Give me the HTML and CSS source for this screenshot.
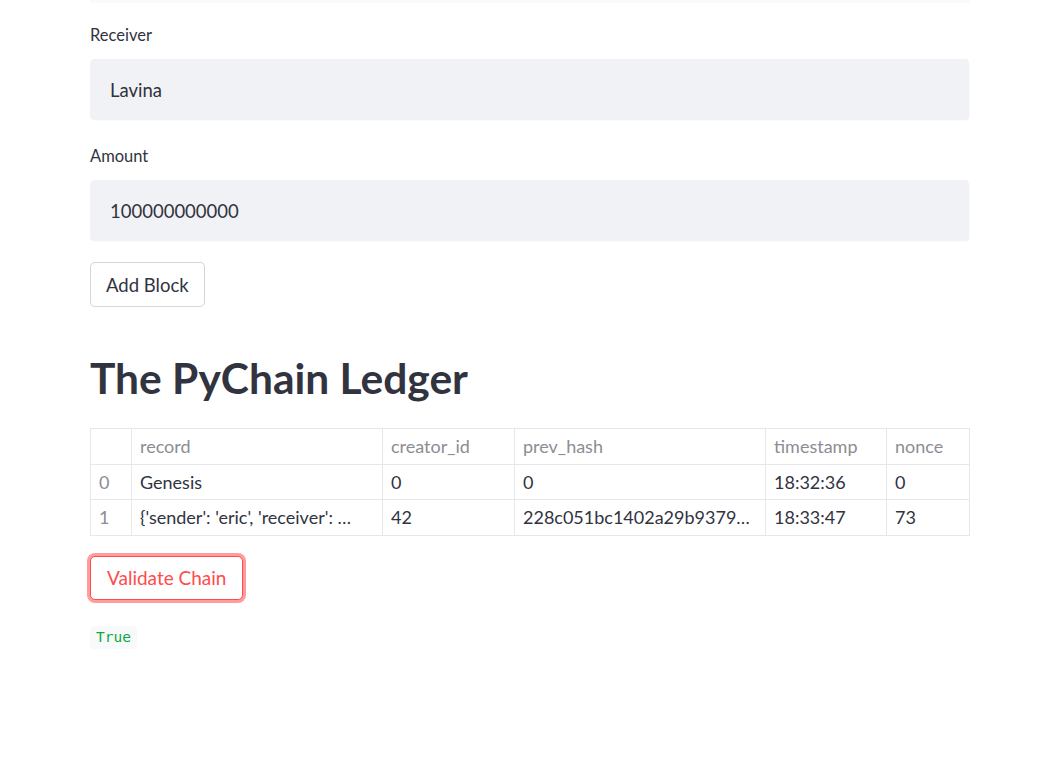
FILE: index.html
```html
<!DOCTYPE html>
<html>
<head>
<meta charset="utf-8">
<link rel="stylesheet" href="styles.css">
</head>
<body>
<div class="page">
  <div class="prev-edge"></div>
  <div class="field">
    <label class="label">Receiver</label>
    <div class="input">Lavina</div>
  </div>
  <div class="field">
    <label class="label">Amount</label>
    <div class="input">100000000000</div>
  </div>
  <button class="btn">Add Block</button>
  <h1 class="title">The PyChain Ledger</h1>
  <table class="df">
    <colgroup>
      <col class="c-idx"><col class="c-rec"><col class="c-cre"><col class="c-hash"><col class="c-ts"><col class="c-nonce">
    </colgroup>
    <thead>
      <tr><th></th><th>record</th><th>creator_id</th><th>prev_hash</th><th>timestamp</th><th>nonce</th></tr>
    </thead>
    <tbody>
      <tr><td class="idx">0</td><td>Genesis</td><td>0</td><td>0</td><td>18:32:36</td><td>0</td></tr>
      <tr><td class="idx">1</td><td>{'sender': 'eric', 'receiver': …</td><td>42</td><td>228c051bc1402a29b9379…</td><td>18:33:47</td><td>73</td></tr>
    </tbody>
  </table>
  <button class="btn btn-focus">Validate Chain</button>
  <div class="result"><code class="code">True</code></div>
</div>
</body>
</html>
```
FILE: styles.css
```css
html, body {
  margin: 0;
  padding: 0;
  background: #ffffff;
}
body {
  font-family: "Lato", "Noto Sans", sans-serif;
  color: #31333f;
}
.page {
  width: 880px;
  margin-left: 90px;
  display: flex;
  flex-direction: column;
  align-items: flex-start;
}
.prev-edge {
  width: 880px;
  height: 3px;
  background: #fafafb;
  border-radius: 0 0 4px 4px;
}
.field {
  width: 880px;
  display: flex;
  flex-direction: column;
  margin-top: 20px;
}
.field + .field {
  margin-top: 23px;
}
.label {
  font-size: 16.5px;
  line-height: 24px;
  height: 24px;
  margin-bottom: 12px;
  color: #31333f;
}
.input {
  box-sizing: border-box;
  height: 62px;
  background: #f0f2f6;
  border: 1px solid #f0f2f6;
  border-right-color: #fafbfc;
  border-bottom-color: #fafbfc;
  border-radius: 5px;
  padding: 0 19px;
  font-size: 18.5px;
  line-height: 60px;
  color: #31333f;
}
.btn {
  box-sizing: border-box;
  margin-top: 20px;
  height: 45px;
  padding: 0 15px;
  background: #ffffff;
  border: 1px solid rgba(49, 51, 63, 0.2);
  border-radius: 5px;
  font-family: "Lato", "Noto Sans", sans-serif;
  font-size: 18.5px;
  color: #31333f;
}
.title {
  margin: 43px 0 0 0;
  font-size: 42.5px;
  line-height: 56px;
  font-weight: 700;
  color: #31333f;
}
.df {
  margin-top: 22px;
  width: 879px;
  table-layout: fixed;
  border-collapse: collapse;
  font-size: 18px;
}
.c-idx { width: 41px; }
.c-rec { width: 251px; }
.c-cre { width: 132px; }
.c-hash { width: 251px; }
.c-ts { width: 121px; }
.c-nonce { width: 83px; }
.df th, .df td {
  border: 1px solid #e6e7ea;
  height: 34.6px;
  padding: 0 8px;
  text-align: left;
  white-space: nowrap;
  overflow: hidden;
  font-weight: 400;
}
.df th {
  color: #8c8d94;
}
.df td {
  color: #31333f;
}
.df td.idx {
  color: #8c8d94;
}
.btn-focus {
  border-color: #ff4b4b;
  color: #ff4b4b;
  box-shadow: 0 0 0 3px rgba(255, 75, 75, 0.55);
  padding: 0 16px;
  height: 44px;
  font-size: 19px;
}
.result {
  margin-top: 26px;
}
.code {
  display: inline-block;
  background: #f8f9fb;
  color: #09ab3b;
  font-family: "DejaVu Sans Mono", monospace;
  font-size: 14.5px;
  line-height: 23px;
  padding: 0 6px;
  border-radius: 4px;
}
```
